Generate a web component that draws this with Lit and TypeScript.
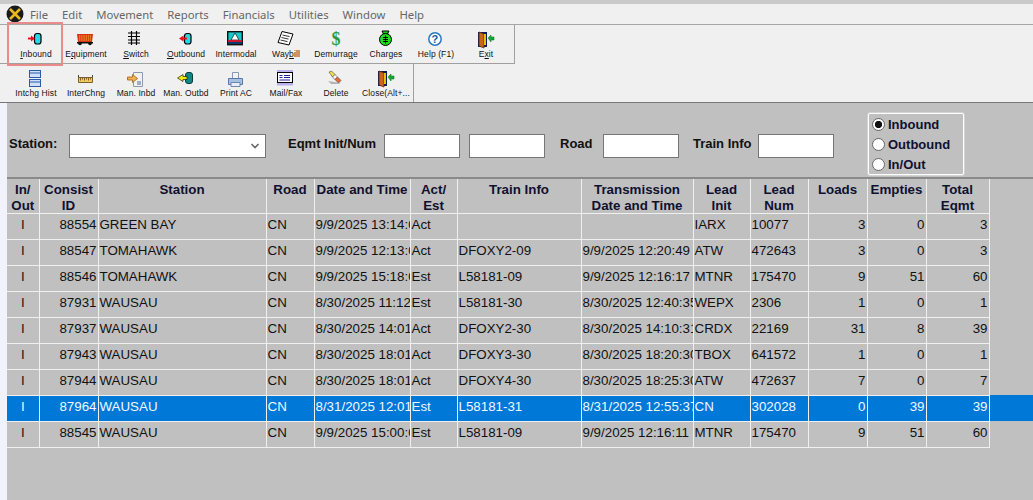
import { LitElement, html, css, svg } from "lit";
import { customElement } from "lit/decorators.js";

const ic = (body: unknown) => html`<svg class="ico" viewBox="0 0 22 22" width="22" height="22">${body}</svg>`;
const door = svg`<path d="M3 4h9v15H3z" fill="#101c5a"/><path d="M4 4l5 2v14l-5-2z" fill="#c8641c" stroke="#5a2a08" stroke-width=".8"/><path d="M9 6h2v11H9z" fill="#e8c000"/><path d="M13 10l3-3v2h3v3h-3v2z" fill="#18a838" stroke="#0a6a20" stroke-width=".5"/>`;

const ICONS: Record<string, unknown> = {
  inbound: ic(svg`<rect x="9.500" y="5.500" width="6.500" height="10.500" rx="2.500" fill="#28d8e8" stroke="#000" stroke-width="1.200"/><path d="M3 9.500h3V7.500l4 3-4 3v-2H3z" fill="#e8101c"/>`),
  equipment: ic(svg`<path d="M2 6h16l-1 8H3z" fill="#d83018"/><path d="M4 8h12M4 10h12M4 12h12" stroke="#f4c020" stroke-width="1.100" stroke-dasharray="1.400 .8"/><path d="M2 14h16v1.500H2z" fill="#111"/><circle cx="5" cy="15.500" r="1.800" fill="#111"/><circle cx="15" cy="15.500" r="1.800" fill="#111"/>`),
  switch: ic(svg`<path d="M6.500 3v14M11.500 3v14M3 5h12M3 8.500h12M3 12h12M3 15h12" stroke="#000" stroke-width="1.200" fill="none"/>`),
  outbound: ic(svg`<rect x="9.500" y="5.500" width="6.500" height="10.500" rx="2.500" fill="#28d8e8" stroke="#000" stroke-width="1.200"/><path d="M12 9.500H8.500V7.500l-4.500 3 4.500 3v-2H12z" fill="#e8101c"/>`),
  intermodal: ic(svg`<rect x="2.700" y="3.700" width="14.600" height="13" fill="#18c8c8" stroke="#111" stroke-width="1.400"/><path d="M10 5l4 7H6z" fill="#fff" stroke="#111" stroke-width=".7"/><path d="M3 12h14v2H3z" fill="#c81830"/><path d="M3 14h14v2H3z" fill="#0c3a70"/>`),
  waybill: ic(svg`<path d="M7 3.500l11 2.500-4 11-11-2.500z" fill="#fff" stroke="#000" stroke-width="1"/><path d="M7.500 7l7 1.600M6.500 9.500l7 1.600M5.500 12l7 1.600" stroke="#000" stroke-width=".8"/>`),
  demurrage: html`<span class="dollar">$</span>`,
  charges: ic(svg`<path d="M7 3h7l-2 4H9z" fill="#20d020" stroke="#000"/><circle cx="10.500" cy="11.500" r="6" fill="#20d820" stroke="#000"/><path d="M10.500 7.500v8M8 9.500h5M8 11.500h5M8 13.500h5" stroke="#000" stroke-width="1"/>`),
  help: ic(svg`<circle cx="10" cy="11" r="6.200" fill="#fff" stroke="#2a7ac0" stroke-width="1.500"/><text x="10" y="15" text-anchor="middle" font-family="Liberation Sans" font-weight="700" font-size="11" fill="#1a5a9a">?</text>`),
  exit: ic(door),
  hist: ic(svg`<rect x="4.500" y="3.500" width="11" height="7" fill="#cfe0f4" stroke="#2a5ab0"/><path d="M5 6h10" stroke="#2a5ab0"/><rect x="4.500" y="12.500" width="11" height="7" fill="#cfe0f4" stroke="#2a5ab0"/><path d="M5 15h10" stroke="#2a5ab0"/>`),
  ruler: ic(svg`<path d="M3.500 8v3M17.500 8v3" stroke="#444"/><path d="M3.500 10.500h14v5h-14z" fill="#f0c860" stroke="#806020"/><path d="M5.500 11v2.500M7.500 11v1.500M9.500 11v2.500M11.500 11v1.500M13.500 11v2.500M15.500 11v1.500" stroke="#604810" stroke-width=".8"/>`),
  maninbd: ic(svg`<path d="M8.500 5.500h9v14h-9z" fill="#f2f2f2" stroke="#8a9ab0"/><path d="M12 15h4M12 17h4" stroke="#4a6a9a"/><path d="M2.500 10h5V7.500l5 4-5 4V13h-5z" fill="#f0b050" stroke="#a06018" stroke-width=".8"/>`),
  manoutbd: ic(svg`<rect x="10.500" y="5.500" width="7" height="11" rx="2.500" fill="#108888" stroke="#063c3c"/><path d="M12 9.500H8V7.500l-5.500 3.500L8 14.500v-2h4z" fill="#f4ec10" stroke="#000" stroke-width=".6"/>`),
  print: ic(svg`<path d="M7.500 5.500h6v6h-6z" fill="#f4f4f4" stroke="#8898b0"/><path d="M3.500 11.500h14v6h-14z" fill="#a8c0e0" stroke="#5a78a8"/><path d="M6 15.500h9v4H6z" fill="#e8eef8" stroke="#6a88b0"/>`),
  mail: ic(svg`<path d="M2 3h16v3H2z" fill="#b8b0ec"/><rect x="2.500" y="5.500" width="15" height="10" fill="#fff" stroke="#000"/><path d="M4.500 8.500h3M9 8.500h6M9 10.500h6M4.500 10.500h3M4.500 13h10.500" stroke="#2020a0" stroke-width="1.100"/><path d="M2 16h16v2.500H2z" fill="#b8b0ec"/>`),
  delete: ic(svg`<path d="M3 14l13 2-3 1H6z" fill="#b4b4b4"/><path d="M4 5l2.500-1 3.500 3.500-2.500 2.500z" fill="#f4e040" stroke="#444" stroke-width=".6"/><path d="M7.500 10l2.500-2.500 2.500 2.500-2.500 2.500z" fill="#fff" stroke="#444" stroke-width=".6"/><path d="M10 12.500l2.500-2.500 3.500 3.500-2.500 2.500z" fill="#e86a30" stroke="#444" stroke-width=".6"/>`),
  close: ic(door),
};

type Tool = [string, string, string, string];
const ROW1: Tool[] = [
  ["inbound", "", "I", "nbound"],
  ["equipment", "E", "q", "uipment"],
  ["switch", "", "S", "witch"],
  ["outbound", "", "O", "utbound"],
  ["intermodal", "Intermodal", "", ""],
  ["waybill", "Way", "b", "ill"],
  ["demurrage", "Demurra", "g", "e"],
  ["charges", "Charges", "", ""],
  ["help", "Help (F1)", "", ""],
  ["exit", "E", "x", "it"],
];
const ROW2: Tool[] = [
  ["hist", "Intchg Hist", "", ""],
  ["ruler", "InterChng", "", ""],
  ["maninbd", "Man. Inbd", "", ""],
  ["manoutbd", "Man. Outbd", "", ""],
  ["print", "Print AC", "", ""],
  ["mail", "Mail/Fax", "", ""],
  ["delete", "Delete", "", ""],
  ["close", "Close(Alt+", "", "..."],
];

const WIDTHS = [32, 59, 168, 48, 96, 47, 124, 112, 57, 58, 59, 59, 63, 44];
const HEAD = ["In/|Out", "Consist|ID", "Station", "Road", "Date and Time", "Act/|Est", "Train Info", "Transmission|Date and Time", "Lead|Init", "Lead|Num", "Loads", "Empties", "Total|Eqmt"];
const ROWS: string[][] = [
  ["I", "88554", "GREEN BAY", "CN", "9/9/2025 13:14:0", "Act", "", "", "IARX", "10077", "3", "0", "3"],
  ["I", "88547", "TOMAHAWK", "CN", "9/9/2025 12:13:0", "Act", "DFOXY2-09", "9/9/2025 12:20:49", "ATW", "472643", "3", "0", "3"],
  ["I", "88546", "TOMAHAWK", "CN", "9/9/2025 15:18:0", "Est", "L58181-09", "9/9/2025 12:16:17", "MTNR", "175470", "9", "51", "60"],
  ["I", "87931", "WAUSAU", "CN", "8/30/2025 11:12", "Est", "L58181-30", "8/30/2025 12:40:35", "WEPX", "2306", "1", "0", "1"],
  ["I", "87937", "WAUSAU", "CN", "8/30/2025 14:01", "Act", "DFOXY2-30", "8/30/2025 14:10:31", "CRDX", "22169", "31", "8", "39"],
  ["I", "87943", "WAUSAU", "CN", "8/30/2025 18:01", "Act", "DFOXY3-30", "8/30/2025 18:20:30", "TBOX", "641572", "1", "0", "1"],
  ["I", "87944", "WAUSAU", "CN", "8/30/2025 18:01", "Act", "DFOXY4-30", "8/30/2025 18:25:30", "ATW", "472637", "7", "0", "7"],
  ["I", "87964", "WAUSAU", "CN", "8/31/2025 12:01", "Est", "L58181-31", "8/31/2025 12:55:37", "CN", "302028", "0", "39", "39"],
  ["I", "88545", "WAUSAU", "CN", "9/9/2025 15:00:0", "Est", "L58181-09", "9/9/2025 12:16:11", "MTNR", "175470", "9", "51", "60"],
];
const ALIGN = ["c", "r", "", "", "", "", "", "", "", "", "r", "r", "r"];

@customElement("app-root")
export class AppRoot extends LitElement {
  static styles = css`
    :host { display: block; width: 1033px; height: 500px; overflow: hidden; background: #f0f0f0; font-family: "Liberation Sans", Arial, sans-serif; color: #111; }
    .strip { height: 4px; background: #c9c9c9; }
    .menu { height: 20px; display: flex; align-items: center; gap: 14px; padding-left: 30px; font: 11.300px "Noto Sans", sans-serif; color: #666; border-bottom: 1px solid #a6a6a6; position: relative; }
    .logo { position: absolute; left: 6px; top: 1px; }
    .bar { display: flex; height: 38px; box-sizing: content-box; background: #f0f0f0; border-right: 1px solid #a0a0a0; border-bottom: 1px solid #a0a0a0; padding-left: 11px; }
    .bar.one { width: 503px; }
    .bar.two { width: 402px; border-bottom: 0; }
    .rule { height: 1px; background: #777; }
    .tool { width: 50px; flex: none; display: flex; flex-direction: column; align-items: center; position: relative; font: 8.500px "Liberation Sans", sans-serif; color: #111; letter-spacing: .1px; white-space: nowrap; }
    .ico { display: block; margin-top: 3px; height: 22px; }
    .lab { margin-top: -1px; line-height: 10px; }
    .dollar { display: block; margin-top: 3px; height: 22px; font: 700 18px/22px "Liberation Serif", serif; color: #2e9a3a; }
    .tool.hot::after { content: ""; position: absolute; left: -4px; top: -3px; width: 52px; height: 40px; border: 2px solid #e98b8b; }
    .body { background: #f1f2fb; padding-left: 7px; }
    .panel { height: 397px; background: #c0c0c0; }
    .filters { height: 76px; box-sizing: border-box; display: flex; align-items: flex-start; padding: 10px 0 0 2px; font-weight: 700; font-size: 13px; border-bottom: 2px solid #8a8a8a; }
    .fld { display: flex; align-items: center; height: 48px; }
    .fld span { flex: none; position: relative; top: 6px; }
    .l-station { width: 48px; }
    .l-eqmt { width: 89px; }
    .l-road { width: 33px; }
    .l-train { width: 60px; }
    select, input[type=text] { box-sizing: border-box; background: #fff; border: 1px solid #767676; border-radius: 0; height: 24px; margin: 0; font: inherit; padding: 0; position: relative; top: 9px; }
    select { width: 197px; margin-left: 12px; margin-right: 22px; color: #111; appearance: none; background: #fff url("data:image/svg+xml,%3Csvg xmlns='http://www.w3.org/2000/svg' width='10' height='6'%3E%3Cpath d='M1.500 1l3.500 3.500L8.500 1' fill='none' stroke='%23666' stroke-width='1.600'/%3E%3C/svg%3E") no-repeat right 5px center; }
    input[type=text] { width: 76px; }
    input[type=text].i1 { margin-left: 7px; }
    input[type=text].i2 { margin-left: 9px; margin-right: 15px; }
    input[type=text].i3 { margin-left: 10px; margin-right: 14px; }
    input[type=text].i4 { margin-left: 5px; }
    .radios { margin-left: 34px; width: 96px; height: 62px; box-sizing: border-box; border: 1px solid #fff; border-radius: 2px; box-shadow: 0 0 0 .5px #e8e8e8; padding: 0 0 0 3px; display: flex; flex-direction: column; color: #101030; }
    .radios label { display: flex; align-items: center; height: 20px; gap: 3px; }
    .radios input { appearance: none; margin: 0; width: 13px; height: 13px; border-radius: 50%; background: #fff; border: 1px solid #666; box-sizing: border-box; }
    .radios input:checked { background: radial-gradient(circle, #111 0 3.300px, #fff 4px); }
    table { border-collapse: collapse; table-layout: fixed; width: 1026px; font-size: 13.330px; }
    th, td { white-space: nowrap; padding: 0 1px; border: 1px solid #f0f0f0; border-top: 0; border-left: 0; box-sizing: border-box; }
    td { overflow: hidden; }
    th { height: 34px; vertical-align: top; font-weight: 700; text-align: center; padding-top: 3px; color: #101030; }
    .hd { height: 30px; line-height: 16px; }
    td { height: 26px; font-weight: 400; vertical-align: top; padding-top: 3px; line-height: 15px; }
    td.c { text-align: center; }
    td.r { text-align: right; }
    .fill { border: 0; }
    tr.sel td { background: #0078d7; color: #f2f8ff; }
  `;

  private tool(t: Tool, i: number, hot = false) {
    const [icon, a, u, b] = t;
    return html`<div class="tool ${hot && i === 0 ? "hot" : ""}">${ICONS[icon]}<div class="lab">${a}${u ? html`<u>${u}</u>` : ""}${b}</div></div>`;
  }

  render() {
    return html`
      <div class="strip"></div>
      <div class="menu">
        <svg class="logo" width="18" height="18" viewBox="0 0 18 18"><circle cx="9" cy="9" r="8.500" fill="#1a1a1a"/><path d="M4 4l10 10M14 4L4 14" stroke="#e8b820" stroke-width="2.600"/></svg>
        ${["File", "Edit", "Movement", "Reports", "Financials", "Utilities", "Window", "Help"].map((m) => html`<span>${m}</span>`)}
      </div>
      <div class="bar one">${ROW1.map((t, i) => this.tool(t, i, true))}</div>
      <div class="bar two">${ROW2.map((t, i) => this.tool(t, i))}</div>
      <div class="rule"></div>
      <div class="body">
      <div class="panel">
        <div class="filters">
          <div class="fld"><span class="l-station">Station:</span>
            <select><option></option></select>
            <span class="l-eqmt">Eqmt Init/Num</span>
            <input type="text" class="i1" />
            <input type="text" class="i2" />
            <span class="l-road">Road</span>
            <input type="text" class="i3" />
            <span class="l-train">Train Info</span>
            <input type="text" class="i4" />
          </div>
          <div class="radios">
            <label><input type="radio" name="d" checked />Inbound</label>
            <label><input type="radio" name="d" />Outbound</label>
            <label><input type="radio" name="d" />In/Out</label>
          </div>
        </div>
        <table>
          <colgroup>${WIDTHS.map((w) => html`<col style="width:${w}px" />`)}</colgroup>
          <thead><tr>${HEAD.map((h) => { const p = h.split("|"); return html`<th><div class="hd">${p[0]}${p[1] ? html`<br />${p[1]}` : ""}</div></th>`; })}<th class="fill"></th></tr></thead>
          <tbody>
            ${ROWS.map((r, i) => html`<tr class="${i === 7 ? "sel" : ""}">${r.map((c, j) => html`<td class="${ALIGN[j]}">${c}</td>`)}<td class="fill"></td></tr>`)}
          </tbody>
        </table>
      </div>
      </div>
    `;
  }
}
